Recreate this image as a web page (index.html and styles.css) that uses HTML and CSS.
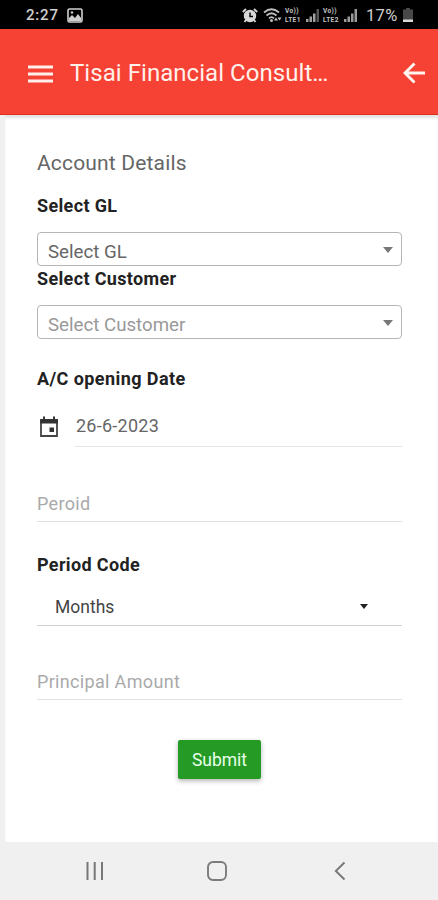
FILE: index.html
```html
<!DOCTYPE html>
<html lang="en">
<head>
<meta charset="utf-8">
<title>Account Details</title>
<link rel="stylesheet" href="styles.css">
</head>
<body>
<div class="status">
  <span class="clock">2:27</span>
  <svg class="photo" width="16" height="15" viewBox="0 0 16 15"><rect x="1" y="1" width="14" height="13" rx="1.5" fill="none" stroke="#d0d0d0" stroke-width="1.6"/><path d="M2 13V10l3-3 3 3 3-4 3 4v3z" fill="#d0d0d0"/><circle cx="5" cy="4.500" r="1.200" fill="#d0d0d0"/></svg>
  <div class="indicators">
    <svg width="16" height="15" viewBox="0 0 16 15"><circle cx="8" cy="8" r="6.200" fill="#d8d8d8"/><path d="M.8 4L4 1M15.200 4L12 1M4 12l-1.500 2M12 12l1.500 2" stroke="#d8d8d8" stroke-width="1.800"/><path d="M8 4.500V8.500h3" fill="none" stroke="#000" stroke-width="1.400"/></svg>
    <svg class="wifi" width="19" height="15" viewBox="0 0 19 15"><g fill="none" stroke="#bdbdbd" stroke-width="1.700"><path d="M1 4.500q7.500-6.500 15 0M3.500 7.500q5-4.500 10 0M6 10.300q2.500-2.500 5 0"/></g><circle cx="8.500" cy="12.500" r="1.500" fill="#bdbdbd"/><path d="M11 12.500l2-3 2 3zM14.500 9.500h4l-2 3z" fill="#c8c8c8"/></svg>
    <span class="lte"><span>Vo))</span><span>LTE1</span></span>
    <svg class="bars" width="14" height="14" viewBox="0 0 14 14"><path d="M0 11h2.500v3H0zM3.500 8.500H6V14H3.500zM7 5.500h2.500V14H7z" fill="#a0a0a0"/><path d="M10.500 1H13v13h-2.500z" fill="#555"/></svg>
    <span class="lte lte2"><span>Vo))</span><span>LTE2</span></span>
    <svg class="bars" width="14" height="14" viewBox="0 0 14 14"><path d="M0 11h2.500v3H0zM3.500 8.500H6V14H3.500zM7 5.500h2.500V14H7zM10.500 1H13v13h-2.500z" fill="#9a9a9a"/></svg>
    <span class="percent">17%</span>
    <svg class="battery" width="10" height="14" viewBox="0 0 10 14"><path d="M3 0h4v1.500h3V14H0V1.500h3z" fill="#484848"/><path d="M0 11.500h10V14H0z" fill="#d8d8d8"/></svg>
  </div>
</div>
<header class="appbar">
  <svg class="menu" width="25" height="18" viewBox="0 0 25 18"><path d="M0 2h25M0 9h25M0 16h25" stroke="#fff0eb" stroke-width="3"/></svg>
  <h1>Tisai Financial Consult<span class="dots">...</span></h1>
  <svg class="back" width="22" height="22" viewBox="0 0 22 22"><path d="M11.500 1.500L2 11l9.500 9.500M2 11h20" fill="none" stroke="#fff4f0" stroke-width="2.900"/></svg>
</header>
<main class="form">
  <h2>Account Details</h2>
  <label class="label first">Select GL</label>
  <div class="combo"><span>Select GL</span><i class="caret"></i></div>
  <label class="label second">Select Customer</label>
  <div class="combo hint"><span>Select Customer</span><i class="caret"></i></div>
  <label class="label opening">A/C opening Date</label>
  <div class="date">
    <svg width="20" height="22" viewBox="0 0 20 22"><path d="M2 4.500h16V20H2z" fill="none" stroke="#444" stroke-width="1.800"/><path d="M1.200 3h17.600v4.500H1.200zM4 .5h2v3H4zM14 .5h2v3h-2zM10.500 11.500h4.500V16h-4.500z" fill="#333"/></svg>
    <div class="date-value">26-6-2023</div>
  </div>
  <div class="line-field period">Peroid</div>
  <label class="label code">Period Code</label>
  <div class="months"><span>Months</span><i class="caret"></i></div>
  <div class="line-field principal">Principal Amount</div>
  <button class="submit">Submit</button>
</main>
<nav class="navbar">
  <svg width="20" height="20" viewBox="0 0 20 20"><path d="M2.500 1v18M9.700 1v18M17 1v18" stroke="#777" stroke-width="2"/></svg>
  <svg class="home" width="22" height="22" viewBox="0 0 22 22"><rect x="2" y="2" width="18" height="18" rx="5" fill="none" stroke="#7b7b7b" stroke-width="1.900"/></svg>
  <svg width="12" height="20" viewBox="0 0 12 20"><path d="M10.500 1.500L1.800 10l8.700 8.500" fill="none" stroke="#777" stroke-width="1.900"/></svg>
</nav>
</body>
</html>
```
FILE: styles.css
```css
* { box-sizing: border-box; }
body {
  margin: 0;
  width: 438px;
  height: 900px;
  display: flex;
  flex-direction: column;
  overflow: hidden;
  background: #f0f0f0;
  font-family: Roboto, sans-serif;
}
svg { display: block; flex: none; }
h1, h2 { margin: 0; font-weight: 400; white-space: nowrap; }
.status {
  flex: none;
  height: 29px;
  display: flex;
  align-items: center;
  padding: 1px 24px 0 26px;
  background: #000;
  color: #d0d0d0;
}
.clock { width: 41px; font-size: 15px; letter-spacing: .8px; font-weight: 500; }
.indicators { margin-left: auto; margin-right: 1px; display: flex; align-items: center; }
.wifi { margin-left: 5px; }
.lte {
  display: flex;
  flex-direction: column;
  gap: 1px;
  width: 18px;
  margin-left: 3px;
  font-size: 6.5px;
  line-height: 8px;
  font-weight: 700;
  letter-spacing: .4px;
  color: #c4c4c4;
}
.lte2 { margin-left: 3px; }
.bars { margin-left: 3px; }
.percent { width: 31px; margin-left: 8px; font-size: 16.5px; letter-spacing: .3px; }
.battery { margin-left: 6px; }
.appbar {
  flex: none;
  height: 86px;
  display: flex;
  align-items: center;
  padding: 3px 13px 0 28px;
  background: #f64234;
  border-bottom: 1px solid #dd3023;
  color: #fff0eb;
}
.menu { margin-top: 2px; }
.appbar h1 { margin-left: 17px; font-size: 24px; line-height: 28px; letter-spacing: .05px; }
.appbar .dots { letter-spacing: -1.4px; }
.back { margin-left: auto; }
.form {
  flex: none;
  height: 727px;
  margin-left: 5px;
  padding: 36px 36px 0 32px;
  display: flex;
  flex-direction: column;
  background: #fff;
  box-shadow: inset 0 4px 3px -1px #e2e2e2;
}
.form h2 { height: 24px; font-size: 21px; line-height: 24px; letter-spacing: .17px; color: #666; }
.label { height: 24px; font-size: 18px; line-height: 24px; letter-spacing: .35px; font-weight: 700; color: #222; white-space: nowrap; }
.first { margin-top: 19px; }
.second { margin-top: 1px; }
.opening { margin-top: 28px; letter-spacing: .42px; }
.code { margin-top: 31px; }
.combo {
  height: 34px;
  margin-top: 14px;
  padding: 6px 8px 0 10px;
  display: flex;
  align-items: center;
  justify-content: space-between;
  border: 1px solid #b5b5b5;
  border-radius: 4px;
  font-size: 18.7px;
  color: #666;
}
.hint { color: #999; }
.caret {
  border: 5px solid transparent;
  border-top: 6px solid #777;
  border-bottom: 0;
}
.combo .caret { margin-top: -5px; }
.date { height: 56px; display: flex; align-items: center; }
.date svg { margin: 15px 0 0 2px; }
.date-value {
  flex: 1;
  height: 56px;
  margin-left: 16px;
  padding-left: 1px;
  border-bottom: 1px solid #e5e5e5;
  font-size: 18px;
  line-height: 69px;
  letter-spacing: .25px;
  color: #666;
}
.line-field { height: 30px; border-bottom: 1px solid #e0e0e0; font-size: 18px; line-height: 24px; letter-spacing: .33px; color: #aaa; }
.period { margin-top: 45px; }
.months {
  height: 49px;
  padding: 12px 34px 0 18px;
  display: flex;
  align-items: center;
  justify-content: space-between;
  border-bottom: 1px solid #d0d0d0;
  font-size: 17.5px;
  color: #444;
}
.months .caret { margin-top: -1px; border-top: 5px solid #222; border-left-width: 4.5px; border-right-width: 4.5px; }
.principal { margin-top: 44px; }
.submit {
  align-self: center;
  width: 83px;
  height: 39px;
  margin: 40px 0 0;
  padding: 0;
  border: 0;
  border-radius: 2px;
  background: #259b25;
  box-shadow: 0 2px 5px rgba(0, 0, 0, .3);
  color: #e8ffe8;
  font: 400 17.5px Roboto, sans-serif;
}
.navbar {
  flex: none;
  height: 58px;
  display: flex;
  align-items: center;
  justify-content: space-between;
  padding: 0 92px 0 85px;
  background: #f0f0f0;
}
.home { margin-right: 6px; }
```
